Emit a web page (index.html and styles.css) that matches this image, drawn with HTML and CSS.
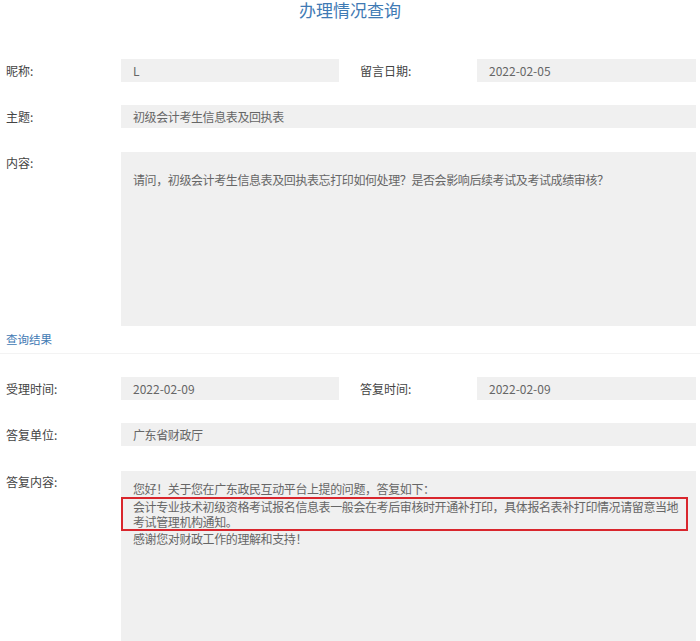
FILE: index.html
```html
<!DOCTYPE html>
<html lang="zh-CN">
<head>
<meta charset="utf-8">
<title>办理情况查询</title>
<link rel="stylesheet" href="styles.css">
</head>
<body>
<div class="page">
  <h1 class="title">办理情况查询</h1>

  <div class="row half first">
    <div class="label">昵称:</div>
    <div class="field">L</div>
    <div class="label label2">留言日期:</div>
    <div class="field date">2022-02-05</div>
  </div>

  <div class="row full">
    <div class="label">主题:</div>
    <div class="field">初级会计考生信息表及回执表</div>
  </div>

  <div class="row full gap24">
    <div class="label top">内容:</div>
    <div class="area">请问，初级会计考生信息表及回执表忘打印如何处理？是否会影响后续考试及考试成绩审核？</div>
  </div>

  <div class="section">查询结果</div>

  <div class="row half after-section">
    <div class="label">受理时间:</div>
    <div class="field date">2022-02-09</div>
    <div class="label label2">答复时间:</div>
    <div class="field date">2022-02-09</div>
  </div>

  <div class="row full">
    <div class="label">答复单位:</div>
    <div class="field">广东省财政厅</div>
  </div>

  <div class="row full gap25">
    <div class="label top">答复内容:</div>
    <div class="area answer">
      <div>您好！关于您在广东政民互动平台上提的问题，答复如下：</div>
      <div class="mark">会计专业技术初级资格考试报名信息表一般会在考后审核时开通补打印，具体报名表补打印情况请留意当地考试管理机构通知。</div>
      <div>感谢您对财政工作的理解和支持！</div>
    </div>
  </div>
</div>
</body>
</html>
```

FILE: styles.css
```css
html, body {
  margin: 0;
  padding: 0;
  background: #ffffff;
}

body {
  font-family: "Noto Sans CJK SC", "Microsoft YaHei", sans-serif;
  font-size: 12px;
  color: #444444;
  overflow: hidden;
}

.page {
  width: 700px;
}

.title {
  margin: 0 0 41px 0;
  height: 18px;
  padding-top: 1px;
  box-sizing: border-box;
  line-height: 17px;
  font-size: 17px;
  font-weight: normal;
  color: #3f7ab4;
  text-align: center;
}

.row {
  display: grid;
  margin-top: 23px;
}

.row.first {
  margin-top: 0;
}

.row.gap24 {
  margin-top: 24px;
}

.row.gap25 {
  margin-top: 25px;
}

.row.half {
  grid-template-columns: 121px 218px 138px 219px;
}

.row.full {
  grid-template-columns: 121px 575px;
}

.label {
  padding-left: 6px;
  height: 23px;
  line-height: 23px;
  color: #444444;
  white-space: nowrap;
}

.label2 {
  padding-left: 21px;
}

.label.top {
  height: auto;
  line-height: 16px;
  padding-top: 3px;
}

.field {
  height: 23px;
  line-height: 23px;
  padding-left: 12px;
  background: #f0f0f0;
  color: #666666;
  letter-spacing: -0.4px;
  white-space: nowrap;
  overflow: hidden;
}

.field.date {
  letter-spacing: 0;
}

.area {
  box-sizing: border-box;
  height: 174px;
  padding: 20px 6px 0 12px;
  font-size: 12px;
  letter-spacing: -0.4px;
  line-height: 16px;
  background: #f0f0f0;
  color: #666666;
}

.area.answer {
  height: 180px;
  padding-top: 10px;
}

.mark {
  margin: 0 2px 0 -12px;
  padding-left: 10px;
  border: 2px solid #d9262d;
  line-height: 15px;
}

.section {
  margin-top: 5px;
  padding: 0 0 6px 6px;
  line-height: 16px;
  font-size: 11.5px;
  color: #3f7ab4;
  border-bottom: 1px solid #f3f3f3;
}

.row.after-section {
  margin-top: 23px;
}
```
